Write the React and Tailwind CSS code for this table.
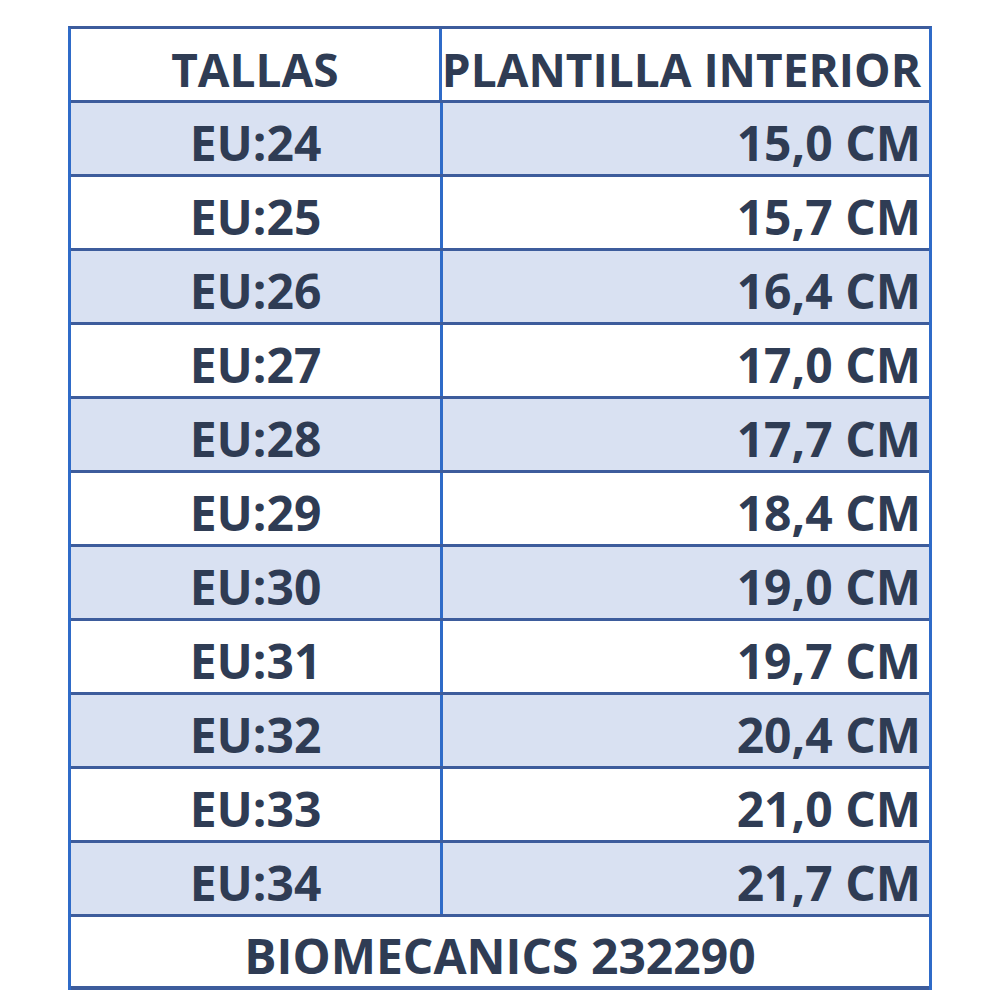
import React from "react";

// sizes and insole lengths
const rows = [
  { size: "EU:24", cm: "15,0 CM" },
  { size: "EU:25", cm: "15,7 CM" },
  { size: "EU:26", cm: "16,4 CM" },
  { size: "EU:27", cm: "17,0 CM" },
  { size: "EU:28", cm: "17,7 CM" },
  { size: "EU:29", cm: "18,4 CM" },
  { size: "EU:30", cm: "19,0 CM" },
  { size: "EU:31", cm: "19,7 CM" },
  { size: "EU:32", cm: "20,4 CM" },
  { size: "EU:33", cm: "21,0 CM" },
  { size: "EU:34", cm: "21,7 CM" },
];

const App = () => {
  return (
    <div className="w-[1000px] h-[1000px] bg-white pt-[26px] pl-[68px] font-['Open_Sans',sans-serif] font-bold text-[#2f3c54]">
      <div className="w-[864px] border-t-[3px] border-[#3d5c9c] border-x-[3px] border-x-[#2f6bc8]">
        {/* header */}
        <div className="flex h-[74px] border-b-[3px] border-[#3d5c9c]">
          <div className="w-[372px] flex items-center justify-center pt-2 text-[46px] leading-none border-r-[3px] border-[#2f6bc8]">
            TALLAS
          </div>
          <div className="flex-1 flex items-center justify-end pr-[8px] pt-2 text-[46px] leading-none whitespace-nowrap">
            PLANTILLA INTERIOR
          </div>
        </div>

        {/* rows */}
        {rows.map((item, index) => {
          const { size, cm } = item;

          return (
            <div
              key={index}
              className={
                index % 2 === 0
                  ? "flex h-[74px] border-b-[3px] border-[#3d5c9c] bg-[#d9e1f2]"
                  : "flex h-[74px] border-b-[3px] border-[#3d5c9c] bg-white"
              }
            >
              <div className="w-[372px] flex items-center justify-center pt-2 text-[48px] leading-none border-r-[3px] border-[#2f6bc8]">
                {size}
              </div>
              <div className="flex-1 flex items-center justify-end pr-[8px] pt-2 text-[48px] leading-none">
                {cm}
              </div>
            </div>
          );
        })}

        {/* footer */}
        <div className="flex h-[73px] items-center justify-center pt-2 text-[48px] leading-none border-b-[4px] border-[#3d5c9c]">
          BIOMECANICS 232290
        </div>
      </div>
    </div>
  );
};

export default App;
